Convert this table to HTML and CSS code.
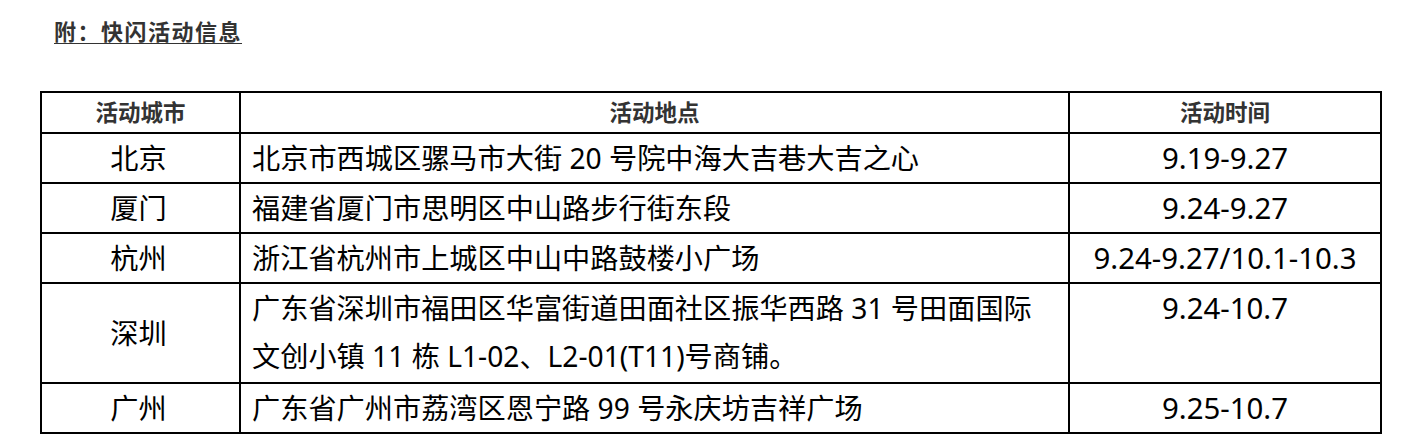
FILE: index.html
```html
<!DOCTYPE html>
<html lang="zh-CN">
<head>
<meta charset="utf-8">
<title>快闪活动信息</title>
<link rel="stylesheet" href="styles.css">
</head>
<body>
<div class="page">
  <p class="title">附：快闪活动信息</p>
  <table class="info">
    <colgroup>
      <col class="c-city">
      <col class="c-addr">
      <col class="c-time">
    </colgroup>
    <thead>
      <tr>
        <th>活动城市</th>
        <th>活动地点</th>
        <th>活动时间</th>
      </tr>
    </thead>
    <tbody>
      <tr>
        <td class="city">北京</td>
        <td class="addr">北京市西城区骡马市大街 20 号院中海大吉巷大吉之心</td>
        <td class="time">9.19-9.27</td>
      </tr>
      <tr>
        <td class="city">厦门</td>
        <td class="addr">福建省厦门市思明区中山路步行街东段</td>
        <td class="time">9.24-9.27</td>
      </tr>
      <tr>
        <td class="city">杭州</td>
        <td class="addr">浙江省杭州市上城区中山中路鼓楼小广场</td>
        <td class="time">9.24-9.27/10.1-10.3</td>
      </tr>
      <tr>
        <td class="city">深圳</td>
        <td class="addr tall">广东省深圳市福田区华富街道田面社区振华西路 31 号田面国际<br>文创小镇 11 栋 L1-02、L2-01(T11)号商铺。</td>
        <td class="time top">9.24-10.7</td>
      </tr>
      <tr>
        <td class="city">广州</td>
        <td class="addr">广东省广州市荔湾区恩宁路 99 号永庆坊吉祥广场</td>
        <td class="time">9.25-10.7</td>
      </tr>
    </tbody>
  </table>
</div>
</body>
</html>
```
FILE: styles.css
```css
html, body {
  margin: 0;
  background: #fff;
}
body {
  font-family: "Noto Sans", "Noto Sans CJK SC", sans-serif;
  color: #000;
}
.page {
  padding: 17px 0 0 40px;
}
.title {
  margin: 0 0 0 14px;
  font-size: 22px;
  line-height: 28px;
  letter-spacing: 1.5px;
  font-weight: 700;
  color: #333;
  text-decoration: underline;
  text-underline-offset: 3px;
  text-decoration-thickness: 1px;
}
.info {
  margin-top: 46px;
  border-collapse: collapse;
  table-layout: fixed;
  width: 1341px;
}
.c-city { width: 199px; }
.c-addr { width: 829px; }
.c-time { width: 312px; }
.info th,
.info td {
  border: 2px solid #000;
  padding: 0;
}
.info th {
  font-size: 22.5px;
  line-height: 39px;
  font-weight: 700;
  color: #333;
  text-align: center;
}
.info td {
  font-size: 28.2px;
  line-height: 48px;
  vertical-align: middle;
}
.info td.city {
  text-align: center;
  padding-right: 4px;
}
.info td.addr {
  text-align: left;
  padding-left: 11px;
}
.info td.addr.tall {
  padding-bottom: 2px;
}
.info td.time {
  text-align: center;
  font-size: 29.4px;
}
.info td.time.top {
  vertical-align: top;
}
```
